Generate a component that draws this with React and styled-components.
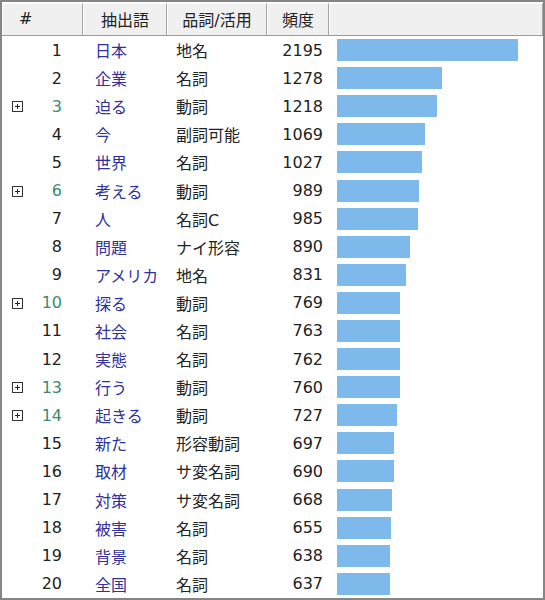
import React from "react";
import styled, { createGlobalStyle } from "styled-components";

const Global = createGlobalStyle`
  html, body { margin: 0; padding: 0; background: #fff; }
  * { box-sizing: border-box; }
`;

const rows = [
  [1, "日本", "地名", 2195, false],
  [2, "企業", "名詞", 1278, false],
  [3, "迫る", "動詞", 1218, true],
  [4, "今", "副詞可能", 1069, false],
  [5, "世界", "名詞", 1027, false],
  [6, "考える", "動詞", 989, true],
  [7, "人", "名詞C", 985, false],
  [8, "問題", "ナイ形容", 890, false],
  [9, "アメリカ", "地名", 831, false],
  [10, "探る", "動詞", 769, true],
  [11, "社会", "名詞", 763, false],
  [12, "実態", "名詞", 762, false],
  [13, "行う", "動詞", 760, true],
  [14, "起きる", "動詞", 727, true],
  [15, "新た", "形容動詞", 697, false],
  [16, "取材", "サ変名詞", 690, false],
  [17, "対策", "サ変名詞", 668, false],
  [18, "被害", "名詞", 655, false],
  [19, "背景", "名詞", 638, false],
  [20, "全国", "名詞", 637, false],
];

const COLS = "81px 84px 100px 62px 1fr";

const Frame = styled.div`
  width: 545px;
  height: 600px;
  border: 2px solid #858585;
  border-right-width: 2px;
  background: #fff;
  font-family: "DejaVu Sans", "Noto Sans CJK JP", sans-serif;
  font-size: 16px;
  color: #222;
  overflow: hidden;
  display: flex;
  flex-direction: column;
`;

const Header = styled.div`
  display: grid;
  grid-template-columns: ${COLS};
  height: 33px;
  margin-top: 1px;
  border-bottom: 1px solid #9a9a9a;
  background: #f0f0f0;
`;

const HeadCell = styled.div`
  display: flex;
  align-items: center;
  justify-content: ${(p) => p.$align || "center"};
  padding-left: ${(p) => p.$pl || 0}px;
  padding-bottom: 2px;
  border-right: 1px solid #a3a3a3;
  border-left: 1px solid #fdfdfd;
  border-top: 1px solid #fdfdfd;
  color: #222;
  font-size: 16px;
`;

const Body = styled.div`
  display: flex;
  flex-direction: column;
`;

const Row = styled.div`
  display: grid;
  grid-template-columns: ${COLS};
  height: 28.1px;
  align-items: center;
`;

const NumCell = styled.div`
  position: relative;
  text-align: right;
  padding-right: 21px;
  color: ${(p) => (p.$expand ? "#3a8a72" : "#222")};
`;

const Expander = styled.span`
  position: absolute;
  left: 10px;
  top: 50%;
  margin-top: -5px;
  width: 11px;
  height: 11px;
  border: 1px solid #333;
  background: #fff;
  &::before {
    content: "";
    position: absolute;
    left: 2px;
    right: 2px;
    top: 4px;
    height: 1px;
    background: #222;
  }
  &::after {
    content: "";
    position: absolute;
    top: 2px;
    bottom: 2px;
    left: 4px;
    width: 1px;
    background: #222;
  }
`;

const WordCell = styled.div`
  padding-left: 12px;
  color: #30309a;
  white-space: nowrap;
`;

const PosCell = styled.div`
  padding-left: 9px;
  color: #222;
  white-space: nowrap;
`;

const FreqCell = styled.div`
  text-align: right;
  padding-right: 6px;
  color: #222;
`;

const BarCell = styled.div`
  padding-left: 8px;
  display: flex;
  align-items: center;
`;

const Bar = styled.div`
  height: 22px;
  background: #7db9ea;
`;

const SCALE = 181 / 2195;

export default function App() {
  return (
    <>
      <Global />
      <Frame>
        <Header>
          <HeadCell $align="flex-start" $pl={16}>#</HeadCell>
          <HeadCell>抽出語</HeadCell>
          <HeadCell>品詞/活用</HeadCell>
          <HeadCell>頻度</HeadCell>
          <HeadCell />
        </Header>
        <Body>
          {rows.map(([n, w, p, f, ex]) => (
            <Row key={n}>
              <NumCell $expand={ex}>
                {ex && <Expander />}
                {n}
              </NumCell>
              <WordCell>{w}</WordCell>
              <PosCell>{p}</PosCell>
              <FreqCell>{f}</FreqCell>
              <BarCell>
                <Bar style={{ width: `${Math.round(f * SCALE)}px` }} />
              </BarCell>
            </Row>
          ))}
        </Body>
      </Frame>
    </>
  );
}
